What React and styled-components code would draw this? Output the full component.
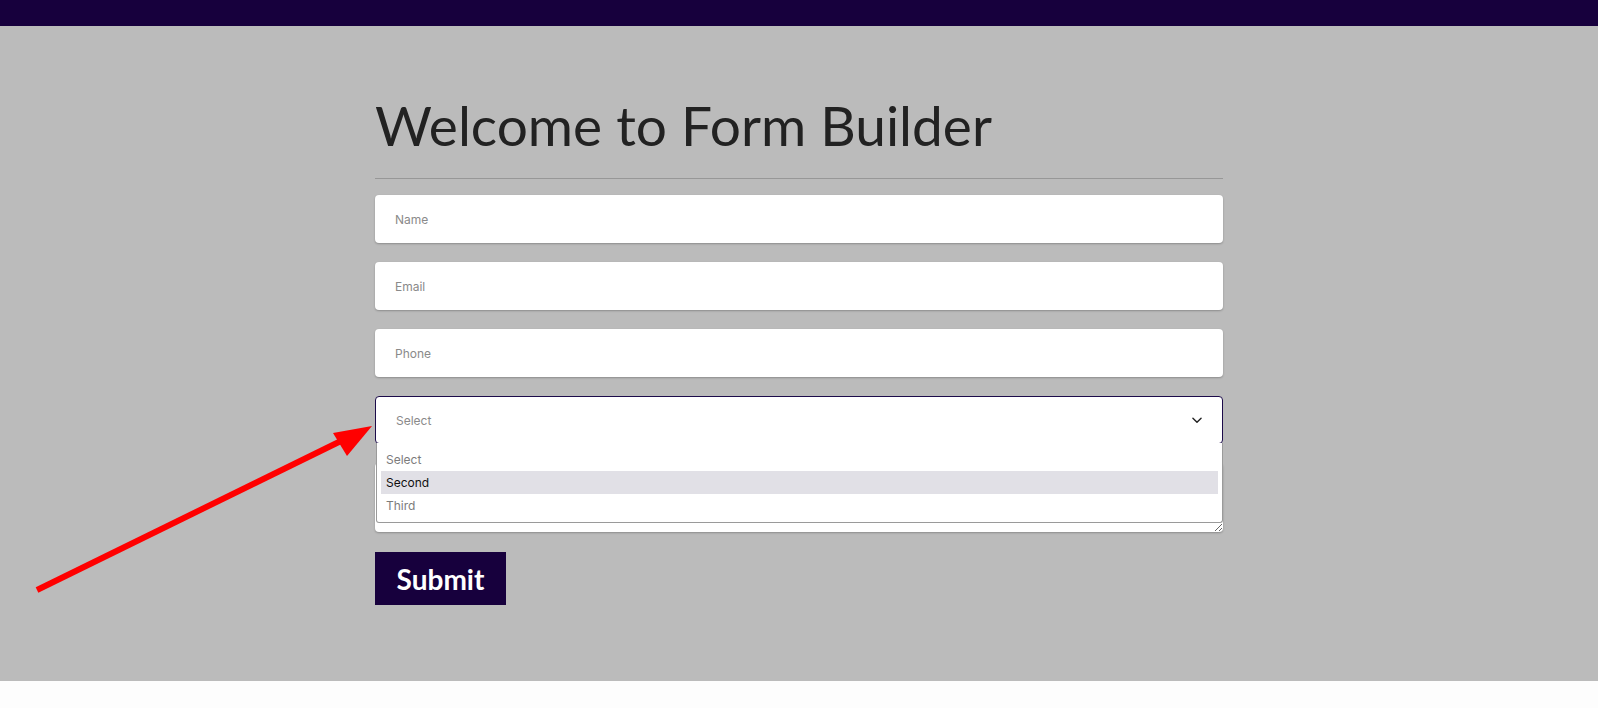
import React from "react";
import styled, { createGlobalStyle } from "styled-components";

const GlobalStyle = createGlobalStyle`
  html, body {
    margin: 0;
    padding: 0;
    background: #fdfdfd;
    font-family: "Inter", "Roboto", sans-serif;
  }
  * { box-sizing: border-box; }
`;

const TopBar = styled.header`
  height: 26px;
  background-color: #17003d;
`;

const Main = styled.main`
  position: relative;
  background-color: #bbbbbb;
  padding: 66px 0 76px;
`;

const Container = styled.div`
  width: 848px;
  margin: 0 auto;
`;

const Title = styled.h1`
  margin: 0;
  padding-bottom: 19px;
  border-bottom: 1px solid #979797;
  font-family: "Lato", sans-serif;
  font-weight: 400;
  font-size: 55px;
  line-height: 67px;
  color: #222222;
`;

const Form = styled.form`
  display: flex;
  flex-direction: column;
  gap: 19px;
  margin-top: 16px;
`;

const Field = styled.input`
  height: 48px;
  width: 100%;
  border: none;
  border-radius: 4px;
  background: #ffffff;
  box-shadow: 0 1px 2px rgba(0, 0, 0, 0.25);
  padding: 0 20px;
  font-family: "Inter", sans-serif;
  font-size: 12px;
  color: #333;
  outline: none;
  &::placeholder {
    color: #8a8a8a;
  }
`;

const SelectWrap = styled.div`
  position: relative;
`;

const SelectBox = styled.div`
  height: 48px;
  display: flex;
  align-items: center;
  justify-content: space-between;
  padding: 0 18px 0 20px;
  background: #ffffff;
  border: 1px solid #1c0b4a;
  border-radius: 4px;
  font-size: 12px;
  color: #8a8a8a;
`;

const Chevron = () => (
  <svg width="14" height="14" viewBox="0 0 24 24" fill="none" stroke="#222" strokeWidth="2.4" strokeLinecap="round" strokeLinejoin="round">
    <path d="M5 9l7 7 7-7" />
  </svg>
);

const Menu = styled.ul`
  position: absolute;
  z-index: 2;
  top: 47px;
  left: 1px;
  right: 0;
  margin: 0;
  padding: 5px 4px 5px;
  list-style: none;
  background: #ffffff;
  border: 1px solid #9a9a9a;
  border-top: none;
  border-radius: 0 0 3px 3px;
`;

const Option = styled.li`
  height: 23px;
  line-height: 23px;
  padding: 0 5px;
  font-size: 12px;
  color: ${(p) => (p.$active ? "#111111" : "#7c7c7c")};
  background: ${(p) => (p.$active ? "#e1e0e6" : "transparent")};
`;

const TextArea = styled.textarea`
  height: 69px;
  width: 100%;
  border: none;
  border-radius: 4px;
  background: #ffffff;
  box-shadow: 0 1px 2px rgba(0, 0, 0, 0.25);
  padding: 14px 20px;
  resize: vertical;
  font-family: "Inter", sans-serif;
  font-size: 12px;
  outline: none;
`;

const SubmitButton = styled.button`
  align-self: flex-start;
  margin-top: 1px;
  width: 131px;
  height: 53px;
  border: none;
  background-color: #17003d;
  color: #ffffff;
  font-family: "Lato", sans-serif;
  font-weight: 700;
  font-size: 28px;
  cursor: pointer;
`;

const Pointer = styled.svg`
  position: absolute;
  left: 0;
  top: 0;
  pointer-events: none;
`;

const Arrow = () => (
  <Pointer width="400" height="620" viewBox="0 0 400 620">
    <line x1="37" y1="564" x2="345" y2="413" stroke="#ff0000" strokeWidth="6" />
    <polygon points="372,400 333,407 347,430" fill="#ff0000" />
  </Pointer>
);

export default function App() {
  return (
    <>
      <GlobalStyle />
      <TopBar />
      <Main>
        <Container>
          <Title>Welcome to Form Builder</Title>
          <Form onSubmit={(e) => e.preventDefault()}>
            <Field placeholder="Name" />
            <Field placeholder="Email" />
            <Field placeholder="Phone" />
            <SelectWrap>
              <SelectBox>
                <span>Select</span>
                <Chevron />
              </SelectBox>
              <Menu>
                <Option>Select</Option>
                <Option $active>Second</Option>
                <Option>Third</Option>
              </Menu>
            </SelectWrap>
            <TextArea />
            <SubmitButton type="submit">Submit</SubmitButton>
          </Form>
        </Container>
        <Arrow />
      </Main>
    </>
  );
}
